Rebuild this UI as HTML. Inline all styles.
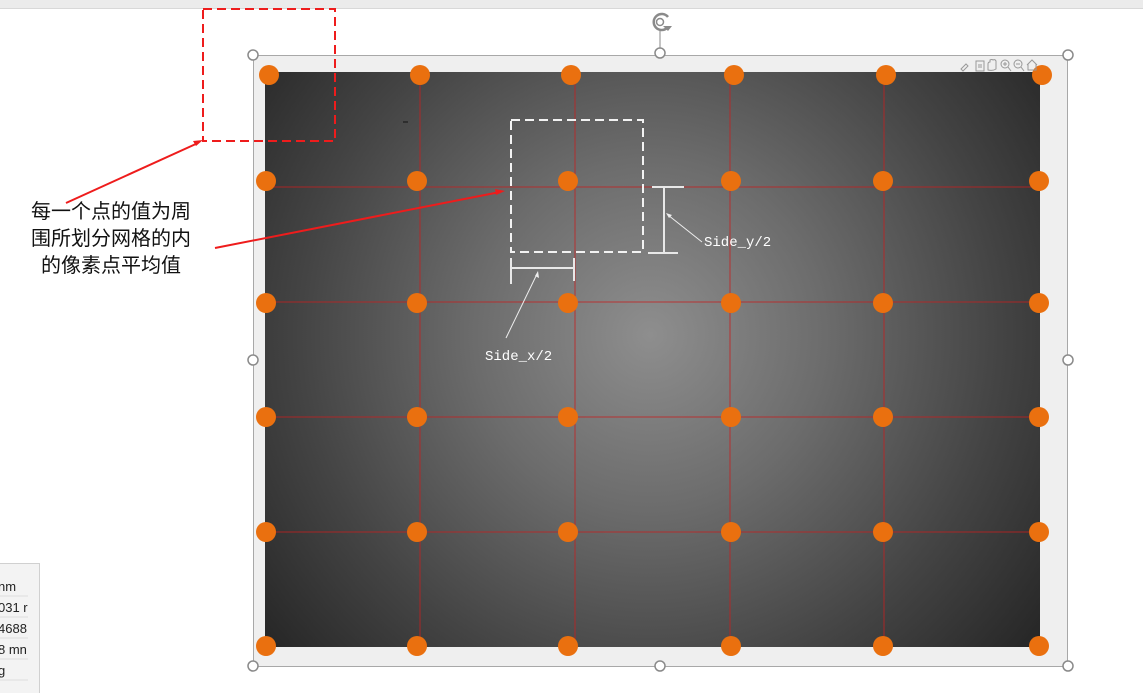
<!DOCTYPE html>
<html><head><meta charset="utf-8"><style>
html,body{margin:0;padding:0;background:#fff;width:1143px;height:693px;overflow:hidden}
svg{display:block}
</style></head><body>
<svg width="1143" height="693" viewBox="0 0 1143 693" xmlns="http://www.w3.org/2000/svg">
<defs>
<radialGradient id="g" cx="650" cy="335" r="500" gradientUnits="userSpaceOnUse">
<stop offset="0" stop-color="#8e8e8e"/>
<stop offset="0.35" stop-color="#6c6c6c"/>
<stop offset="0.7" stop-color="#444"/>
<stop offset="1" stop-color="#252525"/>
</radialGradient>
</defs>
<rect x="0" y="0" width="1143" height="8" fill="#ebebeb"/>
<line x1="0" y1="8.5" x2="1143" y2="8.5" stroke="#d8d8d8"/>
<rect x="253.5" y="55.5" width="814" height="611" fill="#efefef" stroke="#a8a8a8"/>
<rect x="265" y="72" width="775" height="575" fill="url(#g)"/>
<g stroke="#c42020" stroke-width="1" opacity="0.8">
<line x1="420" y1="72" x2="420" y2="647"/>
<line x1="575" y1="72" x2="575" y2="647"/>
<line x1="730" y1="72" x2="730" y2="647"/>
<line x1="884" y1="72" x2="884" y2="647"/>
<line x1="265" y1="187" x2="1040" y2="187"/>
<line x1="265" y1="302" x2="1040" y2="302"/>
<line x1="265" y1="417" x2="1040" y2="417"/>
<line x1="265" y1="532" x2="1040" y2="532"/>
</g>
<g fill="#ea700f">
<circle cx="269" cy="75" r="10"/><circle cx="420" cy="75" r="10"/><circle cx="571" cy="75" r="10"/><circle cx="734" cy="75" r="10"/><circle cx="886" cy="75" r="10"/><circle cx="1042" cy="75" r="10"/>
<circle cx="266" cy="181" r="10"/><circle cx="417" cy="181" r="10"/><circle cx="568" cy="181" r="10"/><circle cx="731" cy="181" r="10"/><circle cx="883" cy="181" r="10"/><circle cx="1039" cy="181" r="10"/>
<circle cx="266" cy="303" r="10"/><circle cx="417" cy="303" r="10"/><circle cx="568" cy="303" r="10"/><circle cx="731" cy="303" r="10"/><circle cx="883" cy="303" r="10"/><circle cx="1039" cy="303" r="10"/>
<circle cx="266" cy="417" r="10"/><circle cx="417" cy="417" r="10"/><circle cx="568" cy="417" r="10"/><circle cx="731" cy="417" r="10"/><circle cx="883" cy="417" r="10"/><circle cx="1039" cy="417" r="10"/>
<circle cx="266" cy="532" r="10"/><circle cx="417" cy="532" r="10"/><circle cx="568" cy="532" r="10"/><circle cx="731" cy="532" r="10"/><circle cx="883" cy="532" r="10"/><circle cx="1039" cy="532" r="10"/>
<circle cx="266" cy="646" r="10"/><circle cx="417" cy="646" r="10"/><circle cx="568" cy="646" r="10"/><circle cx="731" cy="646" r="10"/><circle cx="883" cy="646" r="10"/><circle cx="1039" cy="646" r="10"/>
</g>
<g fill="#fff" stroke="#8a8a8a" stroke-width="1.5">
<circle cx="253" cy="55" r="5"/><circle cx="660" cy="53" r="5"/><circle cx="1068" cy="55" r="5"/>
<circle cx="253" cy="360" r="5"/><circle cx="1068" cy="360" r="5"/>
<circle cx="253" cy="666" r="5"/><circle cx="660" cy="666" r="5"/><circle cx="1068" cy="666" r="5"/>
</g>
<line x1="660" y1="31" x2="660" y2="48" stroke="#8a8a8a"/>
<path d="M668 17 A8 8 0 1 0 667 28" fill="none" stroke="#8a8a8a" stroke-width="2.5"/>
<circle cx="660" cy="22" r="3.5" fill="none" stroke="#8a8a8a" stroke-width="1.5"/>
<path d="M663 26 l9 0 l-4 5z" fill="#8a8a8a"/>
<g fill="none" stroke="#999" stroke-width="1">
<path d="M961 69 l5-5 l2 2 l-5 5z"/>
<rect x="976" y="61" width="8" height="10"/><line x1="978" y1="65" x2="982" y2="65"/><line x1="978" y1="67" x2="982" y2="67"/>
<path d="M988 70 v-6 q0-2 2-2 v-2 q2-1 3 0 q2-1 3 1 v8 q-3 2-8 1z"/>
<circle cx="1005" cy="64" r="4"/><line x1="1008" y1="67" x2="1011" y2="71"/><line x1="1003" y1="64" x2="1007" y2="64"/><line x1="1005" y1="62" x2="1005" y2="66"/>
<circle cx="1018" cy="64" r="4"/><line x1="1021" y1="67" x2="1024" y2="71"/><line x1="1016" y1="64" x2="1020" y2="64"/>
<path d="M1027 65 l5-5 l5 5 M1028 64 v6 h8 v-6"/>
</g>
<rect x="203" y="9" width="132" height="132" fill="none" stroke="#ee1c1c" stroke-width="2" stroke-dasharray="9,5"/>
<rect x="511" y="120" width="132" height="132" fill="none" stroke="#f2f2f2" stroke-width="2" stroke-dasharray="9,5"/>
<g stroke="#e8e8e8" stroke-width="2">
<line x1="652" y1="187" x2="684" y2="187"/><line x1="648" y1="253" x2="678" y2="253"/><line x1="664" y1="187" x2="664" y2="253"/>
<line x1="511" y1="258" x2="511" y2="284"/><line x1="574" y1="258" x2="574" y2="281"/><line x1="511" y1="268" x2="574" y2="268"/>
</g>
<g stroke="#eee" stroke-width="1">
<line x1="702" y1="242" x2="668" y2="215"/><line x1="506" y1="338" x2="537" y2="274"/>
</g>
<path d="M666 213 l6 2 l-3 3z" fill="#eee"/>
<path d="M538 271 l1 7 l-4 -2z" fill="#eee"/>
<text x="704" y="246" font-family="Liberation Mono, monospace" font-size="14" fill="#fff">Side_y/2</text>
<text x="485" y="360" font-family="Liberation Mono, monospace" font-size="14" fill="#fff">Side_x/2</text>
<line x1="403" y1="122" x2="408" y2="122" stroke="#111"/>
<g stroke="#ee1c1c" stroke-width="2">
<line x1="66" y1="203" x2="198" y2="143"/>
<line x1="215" y1="248" x2="500" y2="192"/>
</g>
<path d="M203 140 l-10 1 l3 5z" fill="#ee1c1c"/>
<path d="M505 191 l-10 -2 l1 6z" fill="#ee1c1c"/>
<g font-family="Liberation Serif, 'Noto Sans CJK SC', sans-serif" font-size="20" fill="#111" text-anchor="middle">
<text x="111" y="218">每一个点的值为周</text>
<text x="111" y="245">围所划分网格的内</text>
<text x="111" y="272">的像素点平均值</text>
</g>
<rect x="-1" y="563.5" width="40.5" height="140" fill="#f3f3f3" stroke="#d0d0d0"/>
<g font-family="Liberation Sans, sans-serif" font-size="13" fill="#222">
<text x="-2" y="591">nm</text>
<text x="-2" y="612">031 r</text>
<text x="-2" y="633">4688</text>
<text x="-2" y="654">8 mn</text>
<text x="-2" y="675">g</text>
</g>
<g stroke="#dcdcdc"><line x1="0" y1="596" x2="28" y2="596"/><line x1="0" y1="617" x2="28" y2="617"/><line x1="0" y1="638" x2="28" y2="638"/><line x1="0" y1="659" x2="28" y2="659"/><line x1="0" y1="680" x2="28" y2="680"/></g>
</svg>
</body></html>
